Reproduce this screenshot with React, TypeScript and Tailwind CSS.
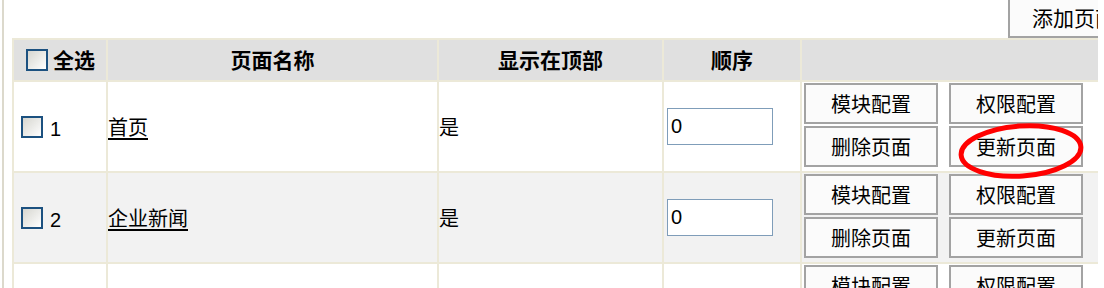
import React from "react";

type Row = { id: number; name: string; top: string; order: string };

const rows: Row[] = [
  { id: 1, name: "首页", top: "是", order: "0" },
  { id: 2, name: "企业新闻", top: "是", order: "0" },
  { id: 3, name: "产品展示", top: "是", order: "0" },
];

const cjk = "font-['SimSun','Noto_Sans_CJK_SC',sans-serif]";

function Box() {
  return (
    <span className="inline-block w-[22px] h-[22px] border-2 border-[#1c5180] bg-gradient-to-br from-[#d6d6d0] to-white align-middle" />
  );
}

function Btn({ label }: { label: string }) {
  return (
    <button
      type="button"
      className={`h-[41px] w-[134px] border-2 border-[#a3a3a3] bg-[#fbfbfb] text-[20px] leading-none text-black ${cjk}`}
    >
      {label}
    </button>
  );
}

export default function App() {
  return (
    <div className="relative w-[1104px] h-[288px] overflow-hidden bg-white">
      <div className="w-[1098px] h-full overflow-hidden pl-[2px]">
        <div className="h-full border-l-2 border-[#dcd9cc] pl-[8px]">
          {/* add page button, clipped at the right edge */}
          <div className="h-[38px] flex items-end">
            <button
              type="button"
              className={`ml-[996px] shrink-0 h-[42px] w-[134px] border-2 border-[#a3a3a3] bg-[#fbfbfb] text-[21px] leading-none text-black text-left pl-[22px] pb-[8px] flex items-end ${cjk}`}
            >
              添加页面
            </button>
          </div>

          <table className="border-collapse w-[1087px] table-fixed">
            <colgroup>
              <col className="w-[94px]" />
              <col className="w-[331px]" />
              <col className="w-[225px]" />
              <col className="w-[138px]" />
              <col className="w-[299px]" />
            </colgroup>
            <thead>
              <tr className="h-[42px] bg-[#e0e0e0]">
                <th className="border-2 border-[#ece9d8] text-left pl-[12px] font-normal">
                  <span className="flex items-center gap-[5px]">
                    <Box />
                    <span className={`text-[21px] font-bold ${cjk}`}>全选</span>
                  </span>
                </th>
                <th className={`border-2 border-[#ece9d8] text-[21px] font-bold ${cjk}`}>页面名称</th>
                <th className={`border-2 border-[#ece9d8] text-[21px] font-bold ${cjk}`}>显示在顶部</th>
                <th className={`border-2 border-[#ece9d8] text-[21px] font-bold ${cjk}`}>顺序</th>
                <th className="border-2 border-[#ece9d8]" />
              </tr>
            </thead>
            <tbody>
              {rows.map((r, i) => (
                <tr key={r.id} className={i % 2 === 1 ? "bg-[#f2f2f2]" : "bg-white"}>
                  <td className="border-2 border-[#ece9d8] pl-[7px] h-[91px]">
                    <span className="flex items-center gap-[7px]">
                      <Box />
                      <span className="text-[20px] font-['Liberation_Sans',sans-serif] text-black pt-[5px]">{r.id}</span>
                    </span>
                  </td>
                  <td className="border-2 border-[#ece9d8] pl-0">
                    <a className={`text-[20px] text-black underline underline-offset-[3px] ${cjk}`}>{r.name}</a>
                  </td>
                  <td className={`border-2 border-[#ece9d8] pl-0 text-[20px] text-black ${cjk}`}>{r.top}</td>
                  <td className="border-2 border-[#ece9d8] pl-[3px]">
                    <input
                      readOnly
                      value={r.order}
                      className="w-[106px] h-[37px] border border-[#7f9db9] bg-white pl-[3px] text-[20px] font-['Liberation_Sans',sans-serif] text-black"
                    />
                  </td>
                  <td className="border-2 border-[#ece9d8] pl-[2px] align-top pt-[1px]">
                    <div className="grid grid-cols-[134px_134px] gap-x-[11px] gap-y-[2px]">
                      <Btn label="模块配置" />
                      <Btn label="权限配置" />
                      <Btn label="删除页面" />
                      <Btn label="更新页面" />
                    </div>
                  </td>
                </tr>
              ))}
            </tbody>
          </table>
        </div>
      </div>

      {/* red annotation around the first 更新页面 button */}
      <svg className="absolute left-[953px] top-[120px] pointer-events-none" width="140" height="64" viewBox="0 0 140 64">
        <ellipse cx="68" cy="31" rx="60" ry="25" transform="rotate(-4 68 31)" fill="none" stroke="#ff0000" strokeWidth="5" />
      </svg>
    </div>
  );
}
